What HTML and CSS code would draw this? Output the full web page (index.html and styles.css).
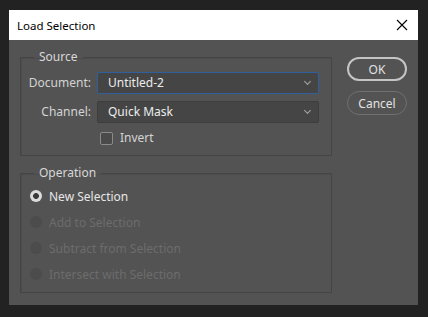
FILE: index.html
```html
<!DOCTYPE html>
<html>
  <head>
    <meta charset="utf-8">
    <title>Load Selection</title>
    <link rel="stylesheet" href="styles.css">
  </head>
  <body>
    <div class="dialog">
      <div class="titlebar">
        <span class="caption">Load Selection</span>
        <svg class="close" width="12" height="12" viewBox="0 0 12 12">
          <path d="M1 1 L11 11 M11 1 L1 11" stroke="#000" stroke-width="1.1" fill="none"/>
        </svg>
      </div>
      <div class="body">
        <div class="groups">
          <fieldset class="group">
            <legend>Source</legend>
            <div class="source">
              <label class="lbl">Document:</label>
              <div class="select focus">Untitled-2<span class="chev"></span></div>
              <label class="lbl">Channel:</label>
              <div class="select">Quick Mask<span class="chev"></span></div>
              <span></span>
              <div class="check"><span class="box"></span>Invert</div>
            </div>
          </fieldset>
          <fieldset class="group op">
            <legend>Operation</legend>
            <div class="radios">
              <div class="radio on"><span class="dot"></span>New Selection</div>
              <div class="radio off"><span class="dot"></span>Add to Selection</div>
              <div class="radio off"><span class="dot"></span>Subtract from Selection</div>
              <div class="radio off"><span class="dot"></span>Intersect with Selection</div>
            </div>
          </fieldset>
        </div>
        <div class="buttons">
          <div class="btn ok">OK</div>
          <div class="btn cancel">Cancel</div>
        </div>
      </div>
    </div>
  </body>
</html>
```

FILE: styles.css
```css
html, body {
  margin:0;
  background:#222;
}
body {
  font-family:"Noto Sans", "Open Sans", sans-serif;
  font-size:12px;
  padding:10px 10px 0 9px;
}
.dialog {
  width:409px;
  height:295px;
  background:#535353;
}
.titlebar {
  background:#fff;
  height:30px;
  display:flex;
  align-items:center;
  justify-content:space-between;
  padding:0 10px 0 8px;
  color:#000;
}
.caption {
  font-size:11.5px;
}
.body {
  display:flex;
  padding:9px 0 0 11px;
}
.groups {
  width:312px;
}
.group {
  margin:0;
  padding:0;
  border:1px solid #454545;
  box-shadow:inset 1px 1px 0 #4c4c4c;
}
.group legend {
  margin-left:13px;
  padding:0 5px;
  color:#d8d8d8;
  line-height:16px;
}
.group.op {
  margin-top:9px;
}
.source {
  display:grid;
  grid-template-columns:70px 222px;
  column-gap:6px;
  row-gap:7px;
  padding:7px 12px 9px 0;
}
.lbl {
  text-align:right;
  color:#d4d4d4;
  line-height:22px;
}
.select {
  height:22px;
  box-sizing:border-box;
  background:#454545;
  border:1px solid #3d3d3d;
  border-radius:2px;
  color:#ececec;
  padding:0 10px;
  line-height:20px;
  display:flex;
  justify-content:space-between;
  align-items:center;
}
.select.focus {
  border-color:#2f5f9c;
}
.chev {
  width:4px;
  height:4px;
  border-right:1px solid #a8a8a8;
  border-bottom:1px solid #a8a8a8;
  transform:rotate(45deg);
  margin:0 -2px 3px 0;
}
.check {
  display:flex;
  align-items:center;
  gap:7px;
  color:#d4d4d4;
  line-height:16px;
  padding-left:3px;
}
.box {
  width:11px;
  height:11px;
  border:1px solid #8a8a8a;
  border-radius:2px;
  background:#4a4a4a;
}
.radios {
  padding:2px 0 5px 9px;
}
.radio {
  height:26px;
  display:flex;
  align-items:center;
  gap:7px;
}
.dot {
  width:12px;
  height:12px;
  border-radius:50%;
  box-sizing:border-box;
}
.radio.on {
  color:#e6e6e6;
}
.radio.on .dot {
  background:radial-gradient(circle, #3a3a3a 0, #3a3a3a 2.6px, #dcdcdc 3.2px);
}
.radio.off {
  color:#6c6c6c;
}
.radio.off .dot {
  background:#4c4c4c;
}
.buttons {
  display:flex;
  flex-direction:column;
  gap:10px;
  margin-left:15px;
  padding-top:8px;
}
.btn {
  width:60px;
  height:24px;
  box-sizing:border-box;
  border-radius:12px;
  text-align:center;
  color:#e2e2e2;
  display:flex;
  align-items:center;
  justify-content:center;
}
.btn.ok {
  border:2px solid #c4c4c4;
}
.btn.cancel {
  border:1.5px solid #707070;
}
```
